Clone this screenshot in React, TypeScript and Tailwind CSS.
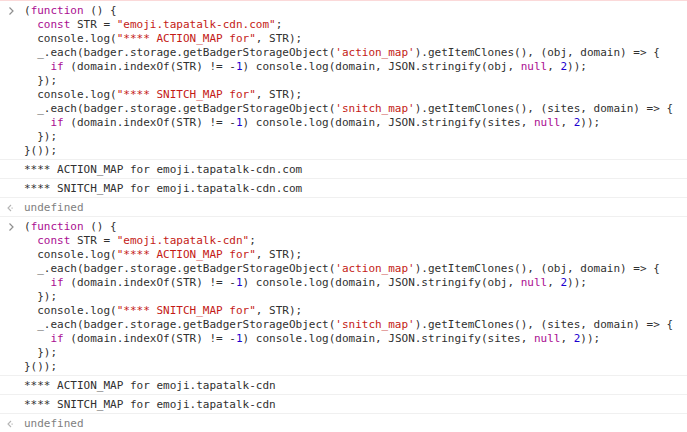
import React from "react";

type Tok = [string, string?];
const K = "text-[#aa0d91]";
const S = "text-[#c41a16]";
const N = "text-[#1c00cf]";

function codeLines(str: string): Tok[][] {
  return [
    [["("], ["function", K], [" () {"]],
    [["  "], ["const", K], [" STR = "], [`"${str}"`, S], [";"]],
    [["  console.log("], ['"**** ACTION_MAP for"', S], [", STR);"]],
    [["  _.each(badger.storage.getBadgerStorageObject("], ["'action_map'", S], [").getItemClones(), (obj, domain) => {"]],
    [["    "], ["if", K], [" (domain.indexOf(STR) != -"], ["1", N], [") console.log(domain, JSON.stringify(obj, "], ["null", K], [", "], ["2", N], ["));"]],
    [["  });"]],
    [["  console.log("], ['"**** SNITCH_MAP for"', S], [", STR);"]],
    [["  _.each(badger.storage.getBadgerStorageObject("], ["'snitch_map'", S], [").getItemClones(), (sites, domain) => {"]],
    [["    "], ["if", K], [" (domain.indexOf(STR) != -"], ["1", N], [") console.log(domain, JSON.stringify(sites, "], ["null", K], [", "], ["2", N], ["));"]],
    [["  });"]],
    [["}());"]],
  ];
}

function PromptIcon() {
  return (
    <svg width="24" height="14" viewBox="0 0 24 14" className="block">
      <path d="M9.5 3.5 L13 7 L9.5 10.5" fill="none" stroke="#8f8f8f" strokeWidth="1.2" />
    </svg>
  );
}

function ResultIcon() {
  return (
    <svg width="24" height="14" viewBox="0 0 24 14" className="block">
      <path d="M11 4 L8 7 L11 10" fill="none" stroke="#b4b4b4" strokeWidth="1.1" />
      <rect x="11.5" y="6.5" width="1.2" height="1.2" fill="#b4b4b4" />
    </svg>
  );
}

function Row({
  icon,
  children,
  top = "border-[#f0f0f0]",
}: {
  icon?: React.ReactNode;
  children: React.ReactNode;
  top?: string;
}) {
  return (
    <div className={`flex border-t ${top} pt-[3px] pb-[1px]`}>
      <div className="w-[24px] shrink-0">{icon}</div>
      <div className="min-w-0">{children}</div>
    </div>
  );
}

function Code({ str, top }: { str: string; top?: string }) {
  return (
    <Row icon={<PromptIcon />} top={top}>
      {codeLines(str).map((line, i) => (
        <div key={i} className="whitespace-pre h-[14px]">
          {line.map(([t, c], j) => (
            <span key={j} className={c}>
              {t}
            </span>
          ))}
        </div>
      ))}
    </Row>
  );
}

function Log({ text }: { text: string }) {
  return (
    <Row>
      <div className="whitespace-pre h-[14px]">{text}</div>
    </Row>
  );
}

function Result() {
  return (
    <Row icon={<ResultIcon />}>
      <div className="whitespace-pre h-[14px] text-[#808080]">undefined</div>
    </Row>
  );
}

export default function App() {
  return (
    <div
      className="w-[687px] h-[432px] overflow-hidden bg-white text-[#303030] text-[11px] leading-[14px]"
      style={{ fontFamily: '"DejaVu Sans Mono", monospace' }}
    >
      <Code str="emoji.tapatalk-cdn.com" top="border-[#fbd9d9]" />
      <Log text="**** ACTION_MAP for emoji.tapatalk-cdn.com" />
      <Log text="**** SNITCH_MAP for emoji.tapatalk-cdn.com" />
      <Result />
      <Code str="emoji.tapatalk-cdn" />
      <Log text="**** ACTION_MAP for emoji.tapatalk-cdn" />
      <Log text="**** SNITCH_MAP for emoji.tapatalk-cdn" />
      <Result />
    </div>
  );
}
